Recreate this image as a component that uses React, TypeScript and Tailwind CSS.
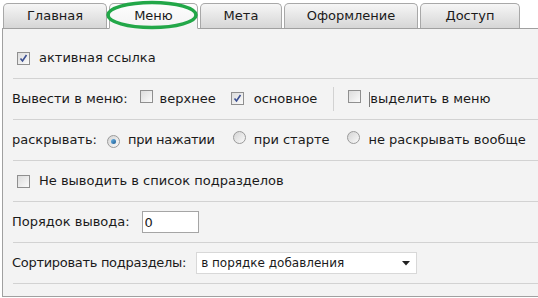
import React from "react";

const tabs = [
  { label: "Главная", w: "w-[104px]", active: false },
  { label: "Меню", w: "w-[89px]", active: true },
  { label: "Мета", w: "w-[82px]", active: false },
  { label: "Оформление", w: "w-[134px]", active: false },
  { label: "Доступ", w: "w-[100px]", active: false },
];

const Check = ({ checked }: { checked?: boolean }) => (
  <span className="relative inline-flex h-[13px] w-[13px] shrink-0 items-center justify-center border border-[#8f8f8f] bg-gradient-to-br from-[#dcdcdc] to-[#fbfbfb]">
    {checked && (
      <svg width="9" height="9" viewBox="0 0 9 9">
        <path d="M1.5 4.5 L3.5 7 L7.5 1" fill="none" stroke="#3b4f91" strokeWidth="1.6" />
      </svg>
    )}
  </span>
);

const Radio = ({ checked }: { checked?: boolean }) => (
  <span className="inline-flex h-[13px] w-[13px] shrink-0 items-center justify-center rounded-full border border-[#9a9a9a] bg-gradient-to-br from-[#d4d4d4] to-[#fafafa]">
    {checked && (
      <span className="h-[5px] w-[5px] rounded-full bg-gradient-to-br from-[#6cb6e8] to-[#1b5d94]" />
    )}
  </span>
);

const Row = ({ children }: { children: React.ReactNode }) => (
  <div className="ml-[10px] flex h-[41px] items-center border-b border-[#d2d2d2]">{children}</div>
);

export default function App() {
  return (
    <div className="relative h-[298px] w-[538px] overflow-hidden bg-white text-[13px] text-[#1a1a1a] [font-family:'DejaVu_Sans',Verdana,sans-serif]">
      <div className="flex h-[28px] items-end gap-[2px] pl-[3px]">
        {tabs.map((t) => (
          <div
            key={t.label}
            className={`${t.w} relative z-10 flex items-center justify-center rounded-t-[5px] border border-[#a8a8a8] ${
              t.active
                ? "-mb-px h-[26px] border-b-[#f3f3f3] bg-gradient-to-b from-[#fdfdfd] to-[#f3f3f3]"
                : "h-[25px] border-b-0 bg-gradient-to-b from-[#f6f6f6] to-[#d6d6d6]"
            }`}
          >
            {t.label}
          </div>
        ))}
      </div>

      <div className="ml-[2px] h-[269px] border-t border-l border-b border-[#a0a0a0] bg-[#f3f3f3] pt-[9px]">
        <Row>
          <div className="ml-[4px] flex items-center gap-[9px]">
            <Check checked />
            <span>активная ссылка</span>
          </div>
        </Row>
        <Row>
          <span className="-ml-px">Вывести в меню:</span>
          <span className="ml-[12px]"><Check /></span>
          <span className="ml-[7px]">верхнее</span>
          <span className="ml-[15px]"><Check checked /></span>
          <span className="ml-[10px]">основное</span>
          <span className="ml-[16px] h-[24px] w-px bg-[#d2d2d2]" />
          <span className="ml-[14px]"><Check /></span>
          <span className="ml-[8px] h-[15px] w-px bg-[#7a7a7a]" />
          <span>выделить в меню</span>
        </Row>
        <Row>
          <span className="-ml-px">раскрывать:</span>
          <span className="ml-[10px]"><Radio checked /></span>
          <span className="ml-[8px] tracking-[-0.3px]">при нажатии</span>
          <span className="ml-[18px]"><Radio /></span>
          <span className="ml-[8px]">при старте</span>
          <span className="ml-[18px]"><Radio /></span>
          <span className="ml-[8px]">не раскрывать вообще</span>
        </Row>
        <Row>
          <div className="ml-[4px] flex items-center gap-[9px]">
            <Check />
            <span>Не выводить в список подразделов</span>
          </div>
        </Row>
        <Row>
          <span className="-ml-px">Порядок вывода:</span>
          <input
            readOnly
            value="0"
            className="ml-[12px] h-[22px] w-[57px] border border-[#a5a5a5] bg-white px-[2px] text-[13px] outline-none [font-family:'DejaVu_Sans',Verdana,sans-serif]"
          />
        </Row>
        <Row>
          <span className="-ml-px tracking-[-0.3px]">Сортировать подразделы:</span>
          <div className="ml-[10px] flex h-[22px] w-[221px] items-center justify-between border border-[#d8d8d8] bg-white pl-[4px] pr-[6px] text-[12px]">
            <span>в порядке добавления</span>
            <svg width="8" height="5" viewBox="0 0 8 5">
              <path d="M0 0 H8 L4 4.5 Z" fill="#222" />
            </svg>
          </div>
        </Row>
      </div>

      <svg className="pointer-events-none absolute left-0 top-0 z-20" width="538" height="40">
        <ellipse cx="152" cy="15" rx="44" ry="12.5" fill="none" stroke="#22a748" strokeWidth="3.5" />
      </svg>
    </div>
  );
}
